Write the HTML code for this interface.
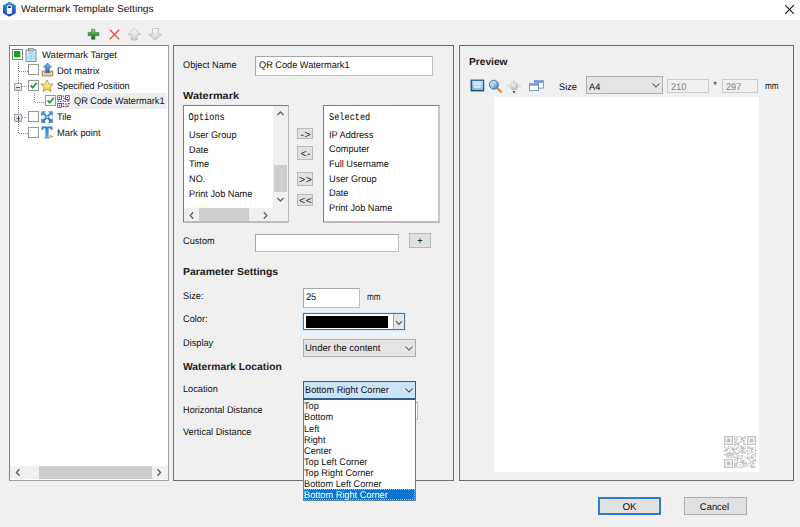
<!DOCTYPE html>
<html><head><meta charset="utf-8">
<style>
*{box-sizing:border-box;}
html,body{margin:0;padding:0;}
body{width:800px;height:527px;overflow:hidden;background:#f0f0f0;position:relative;font-family:"Liberation Sans",sans-serif;font-size:9.2px;color:#101010;text-rendering:geometricPrecision;}
.a{position:absolute;}
.t{position:absolute;white-space:nowrap;line-height:12px;height:12px;}
svg.a{overflow:visible;}
</style></head><body>
<div class="a" style="left:0px;top:0px;width:800px;height:20px;background:#fff;"></div>
<svg class="a" style="left:2px;top:1px" width="16" height="17" viewBox="0 0 16 17">
  <defs><linearGradient id="hx" x1="0" y1="0" x2="0" y2="1"><stop offset="0" stop-color="#2f9aa8"/><stop offset="0.3" stop-color="#2a6fd8"/><stop offset="1" stop-color="#1b3fae"/></linearGradient></defs>
  <path d="M7.4 1.8 L13.0 5.0 L13.0 11.6 L7.4 14.8 L1.8 11.6 L1.8 5.0 Z" fill="url(#hx)" stroke="url(#hx)" stroke-width="1.6" stroke-linejoin="round"/>
  <path d="M4.9 6.6 Q4.9 4.0 7.4 4.0 Q9.9 4.0 9.9 6.6 V11.2 Q9.9 13.1 7.4 13.1 Q4.9 13.1 4.9 11.2 Z" fill="#fff" stroke="#8fe0ff" stroke-width="0.4"/>
  <path d="M5.7 7.1 Q5.7 5.0 7.4 5.0 Q9.1 5.0 9.1 7.1 Z" fill="#1a3a8a"/>
</svg>
<div class="t" style="left:20.5px;top:4px;font-size:10px;color:#111;transform:scaleX(1.015);transform-origin:0 0;">Watermark Template Settings</div>
<svg class="a" style="left:784px;top:4px" width="11" height="11" viewBox="0 0 11 11"><path d="M1.2 1.2 L9.8 9.8 M9.8 1.2 L1.2 9.8" stroke="#111" stroke-width="1.05"/></svg>
<svg class="a" style="left:87px;top:28px" width="13" height="12" viewBox="0 0 13 12">
  <defs><linearGradient id="gp" x1="0" y1="0" x2="0" y2="1"><stop offset="0" stop-color="#a8e49a"/><stop offset="0.45" stop-color="#4aa544"/><stop offset="1" stop-color="#1b521b"/></linearGradient></defs>
  <path d="M4.6 1.2 H7.9 V4.4 H11.8 V7.6 H7.9 V11.2 H4.6 V7.6 H1.2 V4.4 H4.6 Z" fill="url(#gp)" stroke="#2f6a2f" stroke-width="0.6"/>
</svg>
<svg class="a" style="left:108px;top:28px" width="13" height="13" viewBox="0 0 13 13"><path d="M1.8 1.8 L11.2 11.2 M11.2 1.8 L1.8 11.2" stroke="#e4533a" stroke-width="1.3"/></svg>
<svg class="a" style="left:127px;top:28px" width="15" height="13" viewBox="0 0 15 13">
  <defs><linearGradient id="ga" x1="0" y1="0" x2="0" y2="1"><stop offset="0" stop-color="#fdfdfd"/><stop offset="1" stop-color="#cdcdcd"/></linearGradient></defs>
  <path d="M7.3 0.6 L13.8 6.6 H10.2 V12 H4.4 V6.6 H0.8 Z" fill="url(#ga)" stroke="#b8b8b8" stroke-width="0.8"/>
</svg>
<svg class="a" style="left:148px;top:28px" width="15" height="13" viewBox="0 0 15 13">
  <path d="M4.4 0.6 H10.2 V6.4 H13.8 L7.3 12.2 L0.8 6.4 H4.4 Z" fill="url(#ga)" stroke="#b8b8b8" stroke-width="0.8"/>
</svg>
<div class="a" style="left:9px;top:45px;width:160px;height:436px;background:#fff;border:1px solid #828282;border-right-color:#a0a0a0;border-bottom-color:#a0a0a0;"></div>
<div class="a" style="left:10px;top:466px;width:158px;height:13px;background:#f0f0f0;"></div>
<div class="a" style="left:39px;top:466px;width:113px;height:13px;background:#cdcdcd;"></div>
<svg class="a" style="left:14px;top:468px" width="8" height="9" viewBox="0 0 8 9"><path d="M5.5 1.2 L2.5 4.5 L5.5 7.8" fill="none" stroke="#606060" stroke-width="1.4"/></svg>
<svg class="a" style="left:155px;top:468px" width="8" height="9" viewBox="0 0 8 9"><path d="M2.5 1.2 L5.5 4.5 L2.5 7.8" fill="none" stroke="#606060" stroke-width="1.4"/></svg>
<svg class="a" style="left:0;top:0" width="60" height="140" viewBox="0 0 60 140">
  <g stroke="#8a8a8a" stroke-width="1" stroke-dasharray="1 1" fill="none">
    <path d="M18.5 62 V133"/>
    <path d="M19 71.5 H28"/>
    <path d="M22 86.5 H28"/>
    <path d="M22 117.5 H28"/>
    <path d="M19 133.5 H28"/>
    <path d="M34.5 93 V102"/>
    <path d="M35 102.5 H44"/>
  </g>
</svg>
<div class="a" style="left:12px;top:49px;width:11px;height:11px;background:#fff;border:1px solid #858585;"></div>
<div class="a" style="left:14px;top:51px;width:6px;height:6px;background:#1fa01f;box-shadow:0.5px 0.5px 0 #6cc06c;"></div>
<svg class="a" style="left:25px;top:48px" width="12" height="14" viewBox="0 0 12 14">
  <rect x="1" y="1.8" width="10" height="11.6" fill="#d7ecf8" stroke="#5a8bb0" stroke-width="0.9"/>
  <rect x="3.4" y="0.6" width="5.2" height="2.4" fill="#c8c8c8" stroke="#7a7a7a" stroke-width="0.7"/>
  <path d="M2.5 5.8 H9.5 M2.5 8.2 H9.5 M2.5 10.6 H9.5 M6 4.5 V12.5" stroke="#8fc3e4" stroke-width="0.8"/>
</svg>
<div class="t" style="left:42px;top:50px;font-size:9.6px;transform:scaleX(0.99);transform-origin:0 0;">Watermark Target</div>
<div class="a" style="left:28px;top:64px;width:11px;height:11px;background:#fff;border:1px solid #979797;"></div>
<svg class="a" style="left:41px;top:62px" width="13" height="15" viewBox="0 0 13 15">
  <defs><linearGradient id="dm" x1="0" y1="0" x2="0" y2="1"><stop offset="0" stop-color="#7fb2ee"/><stop offset="1" stop-color="#3a5fb8"/></linearGradient></defs>
  <path d="M1.2 9.2 H11.8 V14 H1.2 Z" fill="#f0c89a" stroke="#9a6a3a" stroke-width="0.8"/>
  <path d="M3 10.6 H10" stroke="#b88a5a" stroke-width="0.8"/>
  <path d="M6.5 1 L10.6 5.2 H8.3 V10.5 H4.7 V5.2 H2.4 Z" fill="url(#dm)" stroke="#3060a8" stroke-width="0.6"/>
</svg>
<div class="t" style="left:57.1px;top:66px;font-size:9.6px;transform:scaleX(0.977);transform-origin:0 0;">Dot matrix</div>
<div class="a" style="left:14px;top:83px;width:8px;height:8px;background:linear-gradient(#f6f8fb,#cfd6e0);border:1px solid #9aa0a8;"></div>
<div class="a" style="left:16px;top:86.5px;width:4px;height:1.0px;background:#55607a;"></div>
<div class="a" style="left:28px;top:80px;width:11px;height:11px;background:#fff;border:1px solid #979797;"></div>
<svg class="a" style="left:28px;top:80px" width="11" height="11" viewBox="0 0 11 11"><path d="M2.6 5.4 L4.6 7.6 L8.8 2.8" fill="none" stroke="#1f9a3c" stroke-width="1.7"/></svg>
<svg class="a" style="left:40px;top:78.5px" width="14" height="14" viewBox="0 0 14 14">
  <defs><linearGradient id="st" x1="0" y1="0" x2="0" y2="1"><stop offset="0" stop-color="#fff7c0"/><stop offset="1" stop-color="#f2c93a"/></linearGradient></defs>
  <path d="M7 0.9 L8.9 4.9 L13.2 5.3 L9.9 8.2 L10.9 12.6 L7 10.3 L3.1 12.6 L4.1 8.2 L0.8 5.3 L5.1 4.9 Z" fill="url(#st)" stroke="#b8862a" stroke-width="0.8" stroke-linejoin="round"/>
</svg>
<div class="t" style="left:57.2px;top:81px;font-size:9.6px;transform:scaleX(0.953);transform-origin:0 0;">Specified Position</div>
<div class="a" style="left:72px;top:93px;width:95px;height:16px;background:#eeeeee;"></div>
<div class="a" style="left:44.5px;top:95px;width:11.0px;height:11px;background:#fff;border:1px solid #979797;"></div>
<svg class="a" style="left:44.5px;top:95px" width="11" height="11" viewBox="0 0 11 11"><path d="M2.6 5.4 L4.6 7.6 L8.8 2.8" fill="none" stroke="#1f9a3c" stroke-width="1.7"/></svg>
<svg class="a" style="left:57px;top:95px" width="13" height="13" viewBox="0 0 13 13">
  <g fill="none" stroke="#6a3a80" stroke-width="0.9">
    <rect x="0.7" y="0.7" width="3.8" height="3.8"/><rect x="8.5" y="0.7" width="3.8" height="3.8"/><rect x="0.7" y="8.5" width="3.8" height="3.8"/>
  </g>
  <g fill="#6a3a80"><rect x="2" y="2" width="1.2" height="1.2"/><rect x="9.8" y="2" width="1.2" height="1.2"/><rect x="2" y="9.8" width="1.2" height="1.2"/>
  <rect x="5.6" y="0.5" width="1.3" height="1.3"/><rect x="6.4" y="2.6" width="1.2" height="1.6"/><rect x="5.4" y="5.2" width="1.4" height="1.2"/>
  <rect x="0.6" y="5.6" width="1.6" height="1.2"/><rect x="3" y="6" width="1.4" height="1.2"/><rect x="7.6" y="5.6" width="1.2" height="1.4"/><rect x="10" y="5.4" width="2.4" height="1.2"/>
  <rect x="5.6" y="7.8" width="1.4" height="1.4"/><rect x="8" y="8.4" width="1.6" height="1.2"/><rect x="10.8" y="7.8" width="1.6" height="1.6"/>
  <rect x="5.6" y="10.6" width="1.8" height="1.6"/><rect x="8.4" y="10.8" width="1.4" height="1.4"/><rect x="10.4" y="10.2" width="1.2" height="2"/></g>
</svg>
<div class="t" style="left:74.4px;top:96px;font-size:9.6px;transform:scaleX(0.958);transform-origin:0 0;">QR Code Watermark1</div>
<div class="a" style="left:14px;top:114px;width:8px;height:8px;background:linear-gradient(#f6f8fb,#cfd6e0);border:1px solid #9aa0a8;"></div>
<div class="a" style="left:16px;top:117.5px;width:4px;height:1.0px;background:#8090a8;"></div>
<div class="a" style="left:17.5px;top:115.5px;width:1.0px;height:5.0px;background:#303a50;"></div>
<div class="a" style="left:28px;top:111px;width:11px;height:11px;background:#fff;border:1px solid #979797;"></div>
<svg class="a" style="left:41px;top:111px" width="12" height="12" viewBox="0 0 12 12">
  <defs><linearGradient id="tl" x1="0" y1="0" x2="0" y2="1"><stop offset="0" stop-color="#5aa6e4"/><stop offset="1" stop-color="#2a6cb0"/></linearGradient></defs>
  <g stroke="url(#tl)" stroke-width="2.4"><path d="M2 2 L10 10 M10 2 L2 10"/></g>
  <g fill="url(#tl)">
    <path d="M0.2 0.2 H5.2 L0.2 5.2 Z"/>
    <path d="M11.8 0.2 H6.8 L11.8 5.2 Z"/>
    <path d="M0.2 11.8 H5.2 L0.2 6.8 Z"/>
    <path d="M11.8 11.8 H6.8 L11.8 6.8 Z"/>
  </g>
  <rect x="5" y="5" width="2" height="2" fill="#a8d2f2" transform="rotate(45 6 6)"/>
</svg>
<div class="t" style="left:57.2px;top:112px;font-size:9.6px;transform:scaleX(0.958);transform-origin:0 0;">Tile</div>
<div class="a" style="left:28px;top:126.5px;width:11px;height:11.0px;background:#fff;border:1px solid #979797;"></div>
<svg class="a" style="left:41px;top:126px" width="13" height="13" viewBox="0 0 13 13">
  <defs><linearGradient id="tt" x1="0" y1="0" x2="0" y2="1"><stop offset="0" stop-color="#2a7ac8"/><stop offset="1" stop-color="#52b0ec"/></linearGradient></defs>
  <path d="M0.5 0.5 H11.5 V4 H10.2 Q9.8 2.2 8.4 2.2 H7.6 V10.6 Q7.6 11.3 8.6 11.4 V12.5 H3.4 V11.4 Q4.4 11.3 4.4 10.6 V2.2 H3.6 Q2.2 2.2 1.8 4 H0.5 Z" fill="url(#tt)"/>
  <path d="M8.6 8.6 L12.6 10.6 L8.6 12.6 Z" fill="#f2a24a"/>
</svg>
<div class="t" style="left:57.2px;top:128px;font-size:9.6px;transform:scaleX(0.975);transform-origin:0 0;">Mark point</div>
<div class="a" style="left:173px;top:45px;width:281px;height:436px;border:1px solid #6c6c6c;"></div>
<div class="a" style="left:454px;top:46px;width:1px;height:435px;background:#fbfbfb;"></div>
<div class="t" style="left:182.9px;top:60px;font-size:9.6px;transform:scaleX(0.958);transform-origin:0 0;">Object Name</div>
<div class="a" style="left:255px;top:56px;width:178px;height:20px;background:#fff;border:1px solid #a6a6a6;border-bottom-color:#c0c0c0;border-right-color:#c0c0c0;"></div>
<div class="t" style="left:258.6px;top:60px;font-size:9.6px;transform:scaleX(0.958);transform-origin:0 0;">QR Code Watermark1</div>
<div class="t" style="left:183.2px;top:91px;font-size:10.2px;font-weight:bold;color:#1a1a1a;transform:scaleX(1.07);transform-origin:0 0;">Watermark</div>
<div class="a" style="left:183px;top:105px;width:106px;height:118px;background:#fff;border:1px solid #7c7c7c;border-right-color:#bcbcbc;border-bottom:2px solid #bcbcbc;"></div>
<div class="a" style="left:273px;top:106px;width:15px;height:102px;background:#f0f0f0;"></div>
<div class="a" style="left:274px;top:165px;width:13px;height:27px;background:#cdcdcd;"></div>
<svg class="a" style="left:276px;top:109.5px" width="9" height="7" viewBox="0 0 9 7"><path d="M1.5 5 L4.5 2 L7.5 5" fill="none" stroke="#606060" stroke-width="1.3"/></svg>
<svg class="a" style="left:276px;top:196px" width="9" height="7" viewBox="0 0 9 7"><path d="M1.5 2 L4.5 5 L7.5 2" fill="none" stroke="#606060" stroke-width="1.3"/></svg>
<div class="a" style="left:184px;top:208px;width:104px;height:13px;background:#f0f0f0;"></div>
<div class="a" style="left:199px;top:208px;width:50px;height:13px;background:#cdcdcd;"></div>
<svg class="a" style="left:188px;top:210.5px" width="8" height="9" viewBox="0 0 8 9"><path d="M5.2 1.2 L2.2 4.5 L5.2 7.8" fill="none" stroke="#606060" stroke-width="1.3"/></svg>
<svg class="a" style="left:261px;top:210.5px" width="8" height="9" viewBox="0 0 8 9"><path d="M2.8 1.2 L5.8 4.5 L2.8 7.8" fill="none" stroke="#606060" stroke-width="1.3"/></svg>
<div class="t" style="left:188.6px;top:110px;font-family:Liberation Mono,monospace;font-size:8.6px;color:#000;transform:scaleY(1.2);transform-origin:0 0;">Options</div>
<div class="t" style="left:188.9px;top:130px;font-size:9.6px;transform:scaleX(0.958);transform-origin:0 0;">User Group</div>
<div class="t" style="left:188.9px;top:145px;font-size:9.6px;transform:scaleX(0.958);transform-origin:0 0;">Date</div>
<div class="t" style="left:188.9px;top:159px;font-size:9.6px;transform:scaleX(0.958);transform-origin:0 0;">Time</div>
<div class="t" style="left:188.9px;top:174px;font-size:9.6px;transform:scaleX(0.958);transform-origin:0 0;">NO.</div>
<div class="t" style="left:188.9px;top:189px;font-size:9.6px;transform:scaleX(0.958);transform-origin:0 0;">Print Job Name</div>
<div class="a" style="left:297px;top:128px;width:16px;height:11px;background:#e1e1e1;border:1px solid #b9b9b9;"></div>
<div class="t" style="left:297px;top:129px;width:17px;text-align:center;font-size:10.5px;letter-spacing:0.6px;text-indent:0.6px;color:#222;">-&gt;</div>
<div class="a" style="left:297px;top:146px;width:16px;height:14px;background:#e1e1e1;border:1px solid #b9b9b9;"></div>
<div class="t" style="left:297px;top:148px;width:17px;text-align:center;font-size:10.5px;letter-spacing:0.6px;text-indent:0.6px;color:#222;">&lt;-</div>
<div class="a" style="left:297px;top:172px;width:16px;height:14px;background:#e1e1e1;border:1px solid #b9b9b9;"></div>
<div class="t" style="left:297px;top:174px;width:17px;text-align:center;font-size:10.5px;letter-spacing:0.6px;text-indent:0.6px;color:#222;">&gt;&gt;</div>
<div class="a" style="left:297px;top:194px;width:16px;height:12px;background:#e1e1e1;border:1px solid #b9b9b9;"></div>
<div class="t" style="left:297px;top:195px;width:17px;text-align:center;font-size:10.5px;letter-spacing:0.6px;text-indent:0.6px;color:#222;">&lt;&lt;</div>
<div class="a" style="left:323px;top:105px;width:117px;height:118px;background:#fff;border:1px solid #7c7c7c;border-right:2px solid #c6c6c6;border-bottom:2px solid #bcbcbc;"></div>
<div class="t" style="left:329px;top:110px;font-family:Liberation Mono,monospace;font-size:8.6px;color:#000;transform:scaleY(1.2);transform-origin:0 0;">Selected</div>
<div class="t" style="left:328.6px;top:130px;font-size:9.6px;transform:scaleX(0.958);transform-origin:0 0;">IP Address</div>
<div class="t" style="left:328.6px;top:144px;font-size:9.6px;transform:scaleX(0.958);transform-origin:0 0;">Computer</div>
<div class="t" style="left:328.6px;top:159px;font-size:9.6px;transform:scaleX(0.958);transform-origin:0 0;">Full Username</div>
<div class="t" style="left:328.6px;top:174px;font-size:9.6px;transform:scaleX(0.958);transform-origin:0 0;">User Group</div>
<div class="t" style="left:328.6px;top:188px;font-size:9.6px;transform:scaleX(0.958);transform-origin:0 0;">Date</div>
<div class="t" style="left:328.6px;top:203px;font-size:9.6px;transform:scaleX(0.958);transform-origin:0 0;">Print Job Name</div>
<div class="t" style="left:182.9px;top:236px;font-size:9.6px;transform:scaleX(0.958);transform-origin:0 0;">Custom</div>
<div class="a" style="left:255px;top:234px;width:144px;height:18px;background:#fff;border:1px solid #a6a6a6;border-bottom-color:#c0c0c0;border-right-color:#c0c0c0;"></div>
<div class="a" style="left:409px;top:233px;width:22px;height:15px;background:#e1e1e1;border:1px solid #b9b9b9;"></div>
<div class="t" style="left:409px;top:236px;width:22px;text-align:center;font-size:10px;">+</div>
<div class="t" style="left:183px;top:267px;font-size:10.2px;font-weight:bold;color:#1a1a1a;transform:scaleX(1.025);transform-origin:0 0;">Parameter Settings</div>
<div class="t" style="left:182.5px;top:291px;font-size:9.6px;transform:scaleX(0.958);transform-origin:0 0;">Size:</div>
<div class="a" style="left:303px;top:288px;width:57px;height:20px;background:#fff;border:1px solid #a6a6a6;border-bottom-color:#c0c0c0;border-right-color:#c0c0c0;"></div>
<div class="t" style="left:306px;top:292px;font-size:9.6px;transform:scaleX(0.958);transform-origin:0 0;">25</div>
<div class="t" style="left:366.5px;top:292px;font-size:9.6px;transform:scaleX(0.85);transform-origin:0 0;">mm</div>
<div class="t" style="left:183px;top:314px;font-size:9.6px;transform:scaleX(0.958);transform-origin:0 0;">Color:</div>
<div class="a" style="left:302px;top:312px;width:104px;height:19px;border:1px solid #cfe6fb;"></div>
<div class="a" style="left:303px;top:313px;width:102px;height:17px;background:#fff;border:1px solid #4f7396;"></div>
<div class="a" style="left:305.5px;top:315.5px;width:82.5px;height:12.0px;background:#000;"></div>
<div class="a" style="left:393px;top:314px;width:11px;height:15px;background:#e6e6e6;border-left:1px solid #a9a9a9;"></div>
<svg class="a" style="left:394.5px;top:320px" width="8" height="6" viewBox="0 0 8 6"><path d="M1 1.2 L4 4.4 L7 1.2" fill="none" stroke="#555" stroke-width="1.1"/></svg>
<div class="t" style="left:182.5px;top:338px;font-size:9.6px;transform:scaleX(0.958);transform-origin:0 0;">Display</div>
<div class="a" style="left:303px;top:339px;width:113px;height:18px;background:#e5e5e5;border:1px solid #adadad;"></div>
<div class="t" style="left:304.8px;top:343px;font-size:9.6px;transform:scaleX(0.99);transform-origin:0 0;">Under the content</div>
<svg class="a" style="left:403.5px;top:344.5px" width="10" height="7" viewBox="0 0 10 7"><path d="M1.5 1.5 L5 5 L8.5 1.5" fill="none" stroke="#555" stroke-width="1.05"/></svg>
<div class="t" style="left:183.3px;top:362px;font-size:10.2px;font-weight:bold;color:#1a1a1a;transform:scaleX(1.012);transform-origin:0 0;">Watermark Location</div>
<div class="t" style="left:182.5px;top:384px;font-size:9.6px;transform:scaleX(0.958);transform-origin:0 0;">Location</div>
<div class="t" style="left:182.5px;top:405px;font-size:9.6px;transform:scaleX(0.958);transform-origin:0 0;">Horizontal Distance</div>
<div class="t" style="left:183px;top:427px;font-size:9.6px;transform:scaleX(0.958);transform-origin:0 0;">Vertical Distance</div>
<div class="a" style="left:303px;top:402px;width:115px;height:18px;background:#fff;border:1px solid #a6a6a6;border-bottom-color:#c0c0c0;border-right-color:#c0c0c0;"></div>
<div class="a" style="left:303px;top:381px;width:113px;height:18px;background:#cce4f7;border:1px solid #2e5f8e;"></div>
<div class="t" style="left:304.6px;top:385px;font-size:9.6px;transform:scaleX(0.958);transform-origin:0 0;">Bottom Right Corner</div>
<svg class="a" style="left:403.5px;top:386.5px" width="10" height="7" viewBox="0 0 10 7"><path d="M1.5 1.5 L5 5 L8.5 1.5" fill="none" stroke="#3a3a3a" stroke-width="1.05"/></svg>
<div class="a" style="left:303px;top:399px;width:113px;height:102px;background:#fff;border:1px solid #5d82a6;border-top:1px solid #2e5f8e;"></div>
<div class="a" style="left:304px;top:489px;width:111px;height:11px;background:#0a74d0;border:1px dotted #8cc0ee;"></div>
<div class="t" style="left:304.0px;top:401px;font-size:9.6px;transform:scaleX(0.958);transform-origin:0 0;color:#111;">Top</div>
<div class="t" style="left:304.0px;top:412px;font-size:9.6px;transform:scaleX(0.958);transform-origin:0 0;color:#111;">Bottom</div>
<div class="t" style="left:304.0px;top:424px;font-size:9.6px;transform:scaleX(0.958);transform-origin:0 0;color:#111;">Left</div>
<div class="t" style="left:304.0px;top:435px;font-size:9.6px;transform:scaleX(0.958);transform-origin:0 0;color:#111;">Right</div>
<div class="t" style="left:304.0px;top:446px;font-size:9.6px;transform:scaleX(0.958);transform-origin:0 0;color:#111;">Center</div>
<div class="t" style="left:304.0px;top:457px;font-size:9.6px;transform:scaleX(0.958);transform-origin:0 0;color:#111;">Top Left Corner</div>
<div class="t" style="left:304.0px;top:468px;font-size:9.6px;transform:scaleX(0.958);transform-origin:0 0;color:#111;">Top Right Corner</div>
<div class="t" style="left:304.0px;top:479px;font-size:9.6px;transform:scaleX(0.958);transform-origin:0 0;color:#111;">Bottom Left Corner</div>
<div class="t" style="left:304.0px;top:490px;font-size:9.6px;transform:scaleX(0.958);transform-origin:0 0;color:#fff;">Bottom Right Corner</div>
<div class="a" style="left:459px;top:45px;width:335px;height:436px;border:1px solid #6c6c6c;"></div>
<div class="t" style="left:469px;top:57px;font-size:10.2px;font-weight:bold;color:#1a1a1a;">Preview</div>
<svg class="a" style="left:470px;top:79px" width="15" height="13" viewBox="0 0 15 13">
  <defs><linearGradient id="i1" x1="0" y1="0" x2="0" y2="1"><stop offset="0" stop-color="#c9e6fa"/><stop offset="1" stop-color="#7fb6e2"/></linearGradient></defs>
  <rect x="1.2" y="1.2" width="12.4" height="10.6" fill="url(#i1)" stroke="#2d5a8e" stroke-width="1.3"/>
  <path d="M1.8 2 V11.5 H13" stroke="#1e3e66" stroke-width="0.6" fill="none"/>
  <path d="M4 5 H10.8 M4 7.9 H10.8" stroke="#fff" stroke-width="1.1"/>
</svg>
<svg class="a" style="left:488px;top:79px" width="15" height="14" viewBox="0 0 15 14">
  <defs><linearGradient id="i2" x1="0" y1="0" x2="1" y2="1"><stop offset="0" stop-color="#e4f4ff"/><stop offset="0.5" stop-color="#8fc2ea"/><stop offset="1" stop-color="#3a78b8"/></linearGradient></defs>
  <path d="M8.6 8.6 L12.8 12.6" stroke="#d9922e" stroke-width="2.3" stroke-linecap="round"/>
  <circle cx="5.9" cy="5.7" r="4.5" fill="url(#i2)" stroke="#466e98" stroke-width="0.9"/>
  <path d="M3.6 7.6 L8 3.6" stroke="#fff" stroke-width="0.9" opacity="0.75"/>
</svg>
<svg class="a" style="left:506px;top:78.5px" width="16" height="15" viewBox="0 0 16 15">
  <defs><radialGradient id="i3" cx="0.4" cy="0.35" r="0.7"><stop offset="0" stop-color="#f6f6f6"/><stop offset="1" stop-color="#b0b0b0"/></radialGradient></defs>
  <circle cx="8" cy="7" r="4.2" fill="url(#i3)"/>
  <path d="M8 0.4 L9.4 2.2 H6.6 Z M15.2 7 L13.4 8.4 V5.6 Z M0.8 7 L2.6 5.6 V8.4 Z" fill="#c8c8c8"/>
  <path d="M8 14.2 L6.4 12.2 H9.6 Z" fill="#1a2a6a"/>
</svg>
<svg class="a" style="left:529px;top:80px" width="15" height="11" viewBox="0 0 15 11">
  <defs><linearGradient id="wb" x1="0" y1="0" x2="0" y2="1"><stop offset="0" stop-color="#8fb4ea"/><stop offset="1" stop-color="#4f7fcc"/></linearGradient></defs>
  <rect x="5.5" y="0.5" width="8.8" height="7.6" fill="#fff" stroke="#5a7fb8" stroke-width="0.8"/>
  <rect x="5.5" y="0.5" width="8.8" height="2.2" fill="url(#wb)"/>
  <rect x="0.6" y="3.4" width="9" height="7.2" fill="#fff" stroke="#5a7fb8" stroke-width="0.8"/>
  <rect x="0.6" y="3.4" width="9" height="2.2" fill="url(#wb)"/>
</svg>
<div class="t" style="left:558.7px;top:82px;font-size:9.6px;transform:scaleX(0.958);transform-origin:0 0;">Size</div>
<div class="a" style="left:586px;top:76px;width:77px;height:18px;background:#e5e5e5;border:1px solid #adadad;"></div>
<div class="t" style="left:588.7px;top:82px;font-size:9.6px;transform:scaleX(0.958);transform-origin:0 0;">A4</div>
<svg class="a" style="left:650.5px;top:81.5px" width="10" height="7" viewBox="0 0 10 7"><path d="M1.5 1.5 L5 5 L8.5 1.5" fill="none" stroke="#555" stroke-width="1.05"/></svg>
<div class="a" style="left:667px;top:79px;width:42px;height:14px;background:#f0f0f0;border:1px solid #cccccc;"></div>
<div class="t" style="left:670.9px;top:82px;font-size:9.6px;transform:scaleX(0.958);transform-origin:0 0;color:#808080;">210</div>
<div class="t" style="left:713.3px;top:79.5px;font-size:9.5px;color:#222;">*</div>
<div class="a" style="left:722px;top:79px;width:36px;height:14px;background:#f0f0f0;border:1px solid #cccccc;"></div>
<div class="t" style="left:725.8px;top:82px;font-size:9.6px;transform:scaleX(0.958);transform-origin:0 0;color:#808080;">297</div>
<div class="t" style="left:765px;top:81px;font-size:9.6px;transform:scaleX(0.85);transform-origin:0 0;">mm</div>
<div class="a" style="left:494px;top:97px;width:265px;height:375px;background:#fff;"></div>
<svg class="a" style="left:724px;top:436px" width="32" height="32" viewBox="0 0 32 32"><g fill="#bdbdbd"><rect x="0.00" y="0.00" width="1.33" height="1.33"/><rect x="0.00" y="1.28" width="1.33" height="1.33"/><rect x="0.00" y="2.56" width="1.33" height="1.33"/><rect x="0.00" y="3.84" width="1.33" height="1.33"/><rect x="0.00" y="5.12" width="1.33" height="1.33"/><rect x="0.00" y="6.40" width="1.33" height="1.33"/><rect x="0.00" y="7.68" width="1.33" height="1.33"/><rect x="0.00" y="10.24" width="1.33" height="1.33"/><rect x="0.00" y="14.08" width="1.33" height="1.33"/><rect x="0.00" y="17.92" width="1.33" height="1.33"/><rect x="0.00" y="23.04" width="1.33" height="1.33"/><rect x="0.00" y="24.32" width="1.33" height="1.33"/><rect x="0.00" y="25.60" width="1.33" height="1.33"/><rect x="0.00" y="26.88" width="1.33" height="1.33"/><rect x="0.00" y="28.16" width="1.33" height="1.33"/><rect x="0.00" y="29.44" width="1.33" height="1.33"/><rect x="0.00" y="30.72" width="1.33" height="1.33"/><rect x="1.28" y="0.00" width="1.33" height="1.33"/><rect x="1.28" y="7.68" width="1.33" height="1.33"/><rect x="1.28" y="11.52" width="1.33" height="1.33"/><rect x="1.28" y="12.80" width="1.33" height="1.33"/><rect x="1.28" y="14.08" width="1.33" height="1.33"/><rect x="1.28" y="17.92" width="1.33" height="1.33"/><rect x="1.28" y="23.04" width="1.33" height="1.33"/><rect x="1.28" y="30.72" width="1.33" height="1.33"/><rect x="2.56" y="0.00" width="1.33" height="1.33"/><rect x="2.56" y="2.56" width="1.33" height="1.33"/><rect x="2.56" y="3.84" width="1.33" height="1.33"/><rect x="2.56" y="5.12" width="1.33" height="1.33"/><rect x="2.56" y="7.68" width="1.33" height="1.33"/><rect x="2.56" y="12.80" width="1.33" height="1.33"/><rect x="2.56" y="14.08" width="1.33" height="1.33"/><rect x="2.56" y="16.64" width="1.33" height="1.33"/><rect x="2.56" y="17.92" width="1.33" height="1.33"/><rect x="2.56" y="19.20" width="1.33" height="1.33"/><rect x="2.56" y="20.48" width="1.33" height="1.33"/><rect x="2.56" y="23.04" width="1.33" height="1.33"/><rect x="2.56" y="25.60" width="1.33" height="1.33"/><rect x="2.56" y="26.88" width="1.33" height="1.33"/><rect x="2.56" y="28.16" width="1.33" height="1.33"/><rect x="2.56" y="30.72" width="1.33" height="1.33"/><rect x="3.84" y="0.00" width="1.33" height="1.33"/><rect x="3.84" y="2.56" width="1.33" height="1.33"/><rect x="3.84" y="3.84" width="1.33" height="1.33"/><rect x="3.84" y="5.12" width="1.33" height="1.33"/><rect x="3.84" y="7.68" width="1.33" height="1.33"/><rect x="3.84" y="10.24" width="1.33" height="1.33"/><rect x="3.84" y="11.52" width="1.33" height="1.33"/><rect x="3.84" y="16.64" width="1.33" height="1.33"/><rect x="3.84" y="19.20" width="1.33" height="1.33"/><rect x="3.84" y="20.48" width="1.33" height="1.33"/><rect x="3.84" y="23.04" width="1.33" height="1.33"/><rect x="3.84" y="25.60" width="1.33" height="1.33"/><rect x="3.84" y="26.88" width="1.33" height="1.33"/><rect x="3.84" y="28.16" width="1.33" height="1.33"/><rect x="3.84" y="30.72" width="1.33" height="1.33"/><rect x="5.12" y="0.00" width="1.33" height="1.33"/><rect x="5.12" y="2.56" width="1.33" height="1.33"/><rect x="5.12" y="3.84" width="1.33" height="1.33"/><rect x="5.12" y="5.12" width="1.33" height="1.33"/><rect x="5.12" y="7.68" width="1.33" height="1.33"/><rect x="5.12" y="15.36" width="1.33" height="1.33"/><rect x="5.12" y="16.64" width="1.33" height="1.33"/><rect x="5.12" y="17.92" width="1.33" height="1.33"/><rect x="5.12" y="19.20" width="1.33" height="1.33"/><rect x="5.12" y="23.04" width="1.33" height="1.33"/><rect x="5.12" y="25.60" width="1.33" height="1.33"/><rect x="5.12" y="26.88" width="1.33" height="1.33"/><rect x="5.12" y="28.16" width="1.33" height="1.33"/><rect x="5.12" y="30.72" width="1.33" height="1.33"/><rect x="6.40" y="0.00" width="1.33" height="1.33"/><rect x="6.40" y="7.68" width="1.33" height="1.33"/><rect x="6.40" y="10.24" width="1.33" height="1.33"/><rect x="6.40" y="12.80" width="1.33" height="1.33"/><rect x="6.40" y="16.64" width="1.33" height="1.33"/><rect x="6.40" y="17.92" width="1.33" height="1.33"/><rect x="6.40" y="20.48" width="1.33" height="1.33"/><rect x="6.40" y="23.04" width="1.33" height="1.33"/><rect x="6.40" y="30.72" width="1.33" height="1.33"/><rect x="7.68" y="0.00" width="1.33" height="1.33"/><rect x="7.68" y="1.28" width="1.33" height="1.33"/><rect x="7.68" y="2.56" width="1.33" height="1.33"/><rect x="7.68" y="3.84" width="1.33" height="1.33"/><rect x="7.68" y="5.12" width="1.33" height="1.33"/><rect x="7.68" y="6.40" width="1.33" height="1.33"/><rect x="7.68" y="7.68" width="1.33" height="1.33"/><rect x="7.68" y="11.52" width="1.33" height="1.33"/><rect x="7.68" y="12.80" width="1.33" height="1.33"/><rect x="7.68" y="16.64" width="1.33" height="1.33"/><rect x="7.68" y="17.92" width="1.33" height="1.33"/><rect x="7.68" y="19.20" width="1.33" height="1.33"/><rect x="7.68" y="23.04" width="1.33" height="1.33"/><rect x="7.68" y="24.32" width="1.33" height="1.33"/><rect x="7.68" y="25.60" width="1.33" height="1.33"/><rect x="7.68" y="26.88" width="1.33" height="1.33"/><rect x="7.68" y="28.16" width="1.33" height="1.33"/><rect x="7.68" y="29.44" width="1.33" height="1.33"/><rect x="7.68" y="30.72" width="1.33" height="1.33"/><rect x="8.96" y="11.52" width="1.33" height="1.33"/><rect x="8.96" y="12.80" width="1.33" height="1.33"/><rect x="8.96" y="14.08" width="1.33" height="1.33"/><rect x="8.96" y="15.36" width="1.33" height="1.33"/><rect x="8.96" y="17.92" width="1.33" height="1.33"/><rect x="8.96" y="20.48" width="1.33" height="1.33"/><rect x="10.24" y="0.00" width="1.33" height="1.33"/><rect x="10.24" y="2.56" width="1.33" height="1.33"/><rect x="10.24" y="5.12" width="1.33" height="1.33"/><rect x="10.24" y="6.40" width="1.33" height="1.33"/><rect x="10.24" y="7.68" width="1.33" height="1.33"/><rect x="10.24" y="8.96" width="1.33" height="1.33"/><rect x="10.24" y="12.80" width="1.33" height="1.33"/><rect x="10.24" y="15.36" width="1.33" height="1.33"/><rect x="10.24" y="16.64" width="1.33" height="1.33"/><rect x="10.24" y="20.48" width="1.33" height="1.33"/><rect x="10.24" y="23.04" width="1.33" height="1.33"/><rect x="10.24" y="24.32" width="1.33" height="1.33"/><rect x="10.24" y="26.88" width="1.33" height="1.33"/><rect x="10.24" y="28.16" width="1.33" height="1.33"/><rect x="10.24" y="29.44" width="1.33" height="1.33"/><rect x="10.24" y="30.72" width="1.33" height="1.33"/><rect x="11.52" y="1.28" width="1.33" height="1.33"/><rect x="11.52" y="3.84" width="1.33" height="1.33"/><rect x="11.52" y="5.12" width="1.33" height="1.33"/><rect x="11.52" y="7.68" width="1.33" height="1.33"/><rect x="11.52" y="11.52" width="1.33" height="1.33"/><rect x="11.52" y="12.80" width="1.33" height="1.33"/><rect x="11.52" y="16.64" width="1.33" height="1.33"/><rect x="11.52" y="17.92" width="1.33" height="1.33"/><rect x="11.52" y="21.76" width="1.33" height="1.33"/><rect x="11.52" y="26.88" width="1.33" height="1.33"/><rect x="11.52" y="28.16" width="1.33" height="1.33"/><rect x="11.52" y="29.44" width="1.33" height="1.33"/><rect x="12.80" y="0.00" width="1.33" height="1.33"/><rect x="12.80" y="2.56" width="1.33" height="1.33"/><rect x="12.80" y="6.40" width="1.33" height="1.33"/><rect x="12.80" y="7.68" width="1.33" height="1.33"/><rect x="12.80" y="10.24" width="1.33" height="1.33"/><rect x="12.80" y="11.52" width="1.33" height="1.33"/><rect x="12.80" y="16.64" width="1.33" height="1.33"/><rect x="12.80" y="19.20" width="1.33" height="1.33"/><rect x="12.80" y="20.48" width="1.33" height="1.33"/><rect x="12.80" y="21.76" width="1.33" height="1.33"/><rect x="12.80" y="23.04" width="1.33" height="1.33"/><rect x="12.80" y="24.32" width="1.33" height="1.33"/><rect x="12.80" y="25.60" width="1.33" height="1.33"/><rect x="12.80" y="26.88" width="1.33" height="1.33"/><rect x="12.80" y="29.44" width="1.33" height="1.33"/><rect x="12.80" y="30.72" width="1.33" height="1.33"/><rect x="14.08" y="6.40" width="1.33" height="1.33"/><rect x="14.08" y="7.68" width="1.33" height="1.33"/><rect x="14.08" y="8.96" width="1.33" height="1.33"/><rect x="14.08" y="14.08" width="1.33" height="1.33"/><rect x="14.08" y="16.64" width="1.33" height="1.33"/><rect x="14.08" y="19.20" width="1.33" height="1.33"/><rect x="14.08" y="21.76" width="1.33" height="1.33"/><rect x="15.36" y="0.00" width="1.33" height="1.33"/><rect x="15.36" y="5.12" width="1.33" height="1.33"/><rect x="15.36" y="11.52" width="1.33" height="1.33"/><rect x="15.36" y="15.36" width="1.33" height="1.33"/><rect x="15.36" y="21.76" width="1.33" height="1.33"/><rect x="15.36" y="25.60" width="1.33" height="1.33"/><rect x="15.36" y="28.16" width="1.33" height="1.33"/><rect x="15.36" y="30.72" width="1.33" height="1.33"/><rect x="16.64" y="1.28" width="1.33" height="1.33"/><rect x="16.64" y="2.56" width="1.33" height="1.33"/><rect x="16.64" y="5.12" width="1.33" height="1.33"/><rect x="16.64" y="8.96" width="1.33" height="1.33"/><rect x="16.64" y="10.24" width="1.33" height="1.33"/><rect x="16.64" y="11.52" width="1.33" height="1.33"/><rect x="16.64" y="14.08" width="1.33" height="1.33"/><rect x="16.64" y="15.36" width="1.33" height="1.33"/><rect x="16.64" y="19.20" width="1.33" height="1.33"/><rect x="16.64" y="21.76" width="1.33" height="1.33"/><rect x="16.64" y="24.32" width="1.33" height="1.33"/><rect x="16.64" y="25.60" width="1.33" height="1.33"/><rect x="16.64" y="30.72" width="1.33" height="1.33"/><rect x="17.92" y="1.28" width="1.33" height="1.33"/><rect x="17.92" y="2.56" width="1.33" height="1.33"/><rect x="17.92" y="3.84" width="1.33" height="1.33"/><rect x="17.92" y="10.24" width="1.33" height="1.33"/><rect x="17.92" y="11.52" width="1.33" height="1.33"/><rect x="17.92" y="12.80" width="1.33" height="1.33"/><rect x="17.92" y="14.08" width="1.33" height="1.33"/><rect x="17.92" y="15.36" width="1.33" height="1.33"/><rect x="17.92" y="16.64" width="1.33" height="1.33"/><rect x="17.92" y="19.20" width="1.33" height="1.33"/><rect x="17.92" y="20.48" width="1.33" height="1.33"/><rect x="17.92" y="24.32" width="1.33" height="1.33"/><rect x="17.92" y="25.60" width="1.33" height="1.33"/><rect x="17.92" y="26.88" width="1.33" height="1.33"/><rect x="17.92" y="29.44" width="1.33" height="1.33"/><rect x="19.20" y="1.28" width="1.33" height="1.33"/><rect x="19.20" y="3.84" width="1.33" height="1.33"/><rect x="19.20" y="5.12" width="1.33" height="1.33"/><rect x="19.20" y="6.40" width="1.33" height="1.33"/><rect x="19.20" y="7.68" width="1.33" height="1.33"/><rect x="19.20" y="10.24" width="1.33" height="1.33"/><rect x="19.20" y="11.52" width="1.33" height="1.33"/><rect x="19.20" y="12.80" width="1.33" height="1.33"/><rect x="19.20" y="15.36" width="1.33" height="1.33"/><rect x="19.20" y="23.04" width="1.33" height="1.33"/><rect x="19.20" y="24.32" width="1.33" height="1.33"/><rect x="19.20" y="25.60" width="1.33" height="1.33"/><rect x="19.20" y="26.88" width="1.33" height="1.33"/><rect x="19.20" y="28.16" width="1.33" height="1.33"/><rect x="19.20" y="30.72" width="1.33" height="1.33"/><rect x="20.48" y="0.00" width="1.33" height="1.33"/><rect x="20.48" y="1.28" width="1.33" height="1.33"/><rect x="20.48" y="7.68" width="1.33" height="1.33"/><rect x="20.48" y="11.52" width="1.33" height="1.33"/><rect x="20.48" y="15.36" width="1.33" height="1.33"/><rect x="20.48" y="16.64" width="1.33" height="1.33"/><rect x="20.48" y="20.48" width="1.33" height="1.33"/><rect x="20.48" y="26.88" width="1.33" height="1.33"/><rect x="20.48" y="29.44" width="1.33" height="1.33"/><rect x="21.76" y="14.08" width="1.33" height="1.33"/><rect x="21.76" y="21.76" width="1.33" height="1.33"/><rect x="21.76" y="25.60" width="1.33" height="1.33"/><rect x="21.76" y="26.88" width="1.33" height="1.33"/><rect x="21.76" y="28.16" width="1.33" height="1.33"/><rect x="23.04" y="0.00" width="1.33" height="1.33"/><rect x="23.04" y="1.28" width="1.33" height="1.33"/><rect x="23.04" y="2.56" width="1.33" height="1.33"/><rect x="23.04" y="3.84" width="1.33" height="1.33"/><rect x="23.04" y="5.12" width="1.33" height="1.33"/><rect x="23.04" y="6.40" width="1.33" height="1.33"/><rect x="23.04" y="7.68" width="1.33" height="1.33"/><rect x="23.04" y="10.24" width="1.33" height="1.33"/><rect x="23.04" y="11.52" width="1.33" height="1.33"/><rect x="23.04" y="14.08" width="1.33" height="1.33"/><rect x="23.04" y="16.64" width="1.33" height="1.33"/><rect x="23.04" y="17.92" width="1.33" height="1.33"/><rect x="23.04" y="20.48" width="1.33" height="1.33"/><rect x="23.04" y="21.76" width="1.33" height="1.33"/><rect x="23.04" y="29.44" width="1.33" height="1.33"/><rect x="24.32" y="0.00" width="1.33" height="1.33"/><rect x="24.32" y="7.68" width="1.33" height="1.33"/><rect x="24.32" y="10.24" width="1.33" height="1.33"/><rect x="24.32" y="11.52" width="1.33" height="1.33"/><rect x="24.32" y="14.08" width="1.33" height="1.33"/><rect x="24.32" y="21.76" width="1.33" height="1.33"/><rect x="24.32" y="23.04" width="1.33" height="1.33"/><rect x="24.32" y="26.88" width="1.33" height="1.33"/><rect x="25.60" y="0.00" width="1.33" height="1.33"/><rect x="25.60" y="2.56" width="1.33" height="1.33"/><rect x="25.60" y="3.84" width="1.33" height="1.33"/><rect x="25.60" y="5.12" width="1.33" height="1.33"/><rect x="25.60" y="7.68" width="1.33" height="1.33"/><rect x="25.60" y="11.52" width="1.33" height="1.33"/><rect x="25.60" y="16.64" width="1.33" height="1.33"/><rect x="25.60" y="20.48" width="1.33" height="1.33"/><rect x="25.60" y="24.32" width="1.33" height="1.33"/><rect x="25.60" y="26.88" width="1.33" height="1.33"/><rect x="25.60" y="29.44" width="1.33" height="1.33"/><rect x="26.88" y="0.00" width="1.33" height="1.33"/><rect x="26.88" y="2.56" width="1.33" height="1.33"/><rect x="26.88" y="3.84" width="1.33" height="1.33"/><rect x="26.88" y="5.12" width="1.33" height="1.33"/><rect x="26.88" y="7.68" width="1.33" height="1.33"/><rect x="26.88" y="11.52" width="1.33" height="1.33"/><rect x="26.88" y="12.80" width="1.33" height="1.33"/><rect x="26.88" y="14.08" width="1.33" height="1.33"/><rect x="26.88" y="15.36" width="1.33" height="1.33"/><rect x="26.88" y="19.20" width="1.33" height="1.33"/><rect x="26.88" y="20.48" width="1.33" height="1.33"/><rect x="26.88" y="21.76" width="1.33" height="1.33"/><rect x="26.88" y="25.60" width="1.33" height="1.33"/><rect x="26.88" y="28.16" width="1.33" height="1.33"/><rect x="26.88" y="29.44" width="1.33" height="1.33"/><rect x="26.88" y="30.72" width="1.33" height="1.33"/><rect x="28.16" y="0.00" width="1.33" height="1.33"/><rect x="28.16" y="2.56" width="1.33" height="1.33"/><rect x="28.16" y="3.84" width="1.33" height="1.33"/><rect x="28.16" y="5.12" width="1.33" height="1.33"/><rect x="28.16" y="7.68" width="1.33" height="1.33"/><rect x="28.16" y="11.52" width="1.33" height="1.33"/><rect x="28.16" y="12.80" width="1.33" height="1.33"/><rect x="28.16" y="15.36" width="1.33" height="1.33"/><rect x="28.16" y="17.92" width="1.33" height="1.33"/><rect x="28.16" y="20.48" width="1.33" height="1.33"/><rect x="28.16" y="21.76" width="1.33" height="1.33"/><rect x="28.16" y="24.32" width="1.33" height="1.33"/><rect x="28.16" y="25.60" width="1.33" height="1.33"/><rect x="28.16" y="26.88" width="1.33" height="1.33"/><rect x="28.16" y="29.44" width="1.33" height="1.33"/><rect x="28.16" y="30.72" width="1.33" height="1.33"/><rect x="29.44" y="0.00" width="1.33" height="1.33"/><rect x="29.44" y="7.68" width="1.33" height="1.33"/><rect x="29.44" y="17.92" width="1.33" height="1.33"/><rect x="29.44" y="23.04" width="1.33" height="1.33"/><rect x="29.44" y="24.32" width="1.33" height="1.33"/><rect x="29.44" y="26.88" width="1.33" height="1.33"/><rect x="29.44" y="30.72" width="1.33" height="1.33"/><rect x="30.72" y="0.00" width="1.33" height="1.33"/><rect x="30.72" y="1.28" width="1.33" height="1.33"/><rect x="30.72" y="2.56" width="1.33" height="1.33"/><rect x="30.72" y="3.84" width="1.33" height="1.33"/><rect x="30.72" y="5.12" width="1.33" height="1.33"/><rect x="30.72" y="6.40" width="1.33" height="1.33"/><rect x="30.72" y="7.68" width="1.33" height="1.33"/><rect x="30.72" y="10.24" width="1.33" height="1.33"/><rect x="30.72" y="12.80" width="1.33" height="1.33"/><rect x="30.72" y="14.08" width="1.33" height="1.33"/><rect x="30.72" y="16.64" width="1.33" height="1.33"/><rect x="30.72" y="19.20" width="1.33" height="1.33"/><rect x="30.72" y="20.48" width="1.33" height="1.33"/><rect x="30.72" y="23.04" width="1.33" height="1.33"/><rect x="30.72" y="24.32" width="1.33" height="1.33"/><rect x="30.72" y="29.44" width="1.33" height="1.33"/></g></svg>
<div class="a" style="left:598px;top:497px;width:63px;height:18px;background:#e1e1e1;border:2px solid #2a7fd0;"></div>
<div class="t" style="left:598px;top:502px;width:63px;text-align:center;font-size:9.8px;">OK</div>
<div class="a" style="left:684px;top:497px;width:63px;height:18px;background:#e1e1e1;border:1px solid #adadad;"></div>
<div class="t" style="left:683px;top:502px;width:63px;text-align:center;font-size:9.8px;transform:scaleX(0.96);">Cancel</div>
</body></html>
